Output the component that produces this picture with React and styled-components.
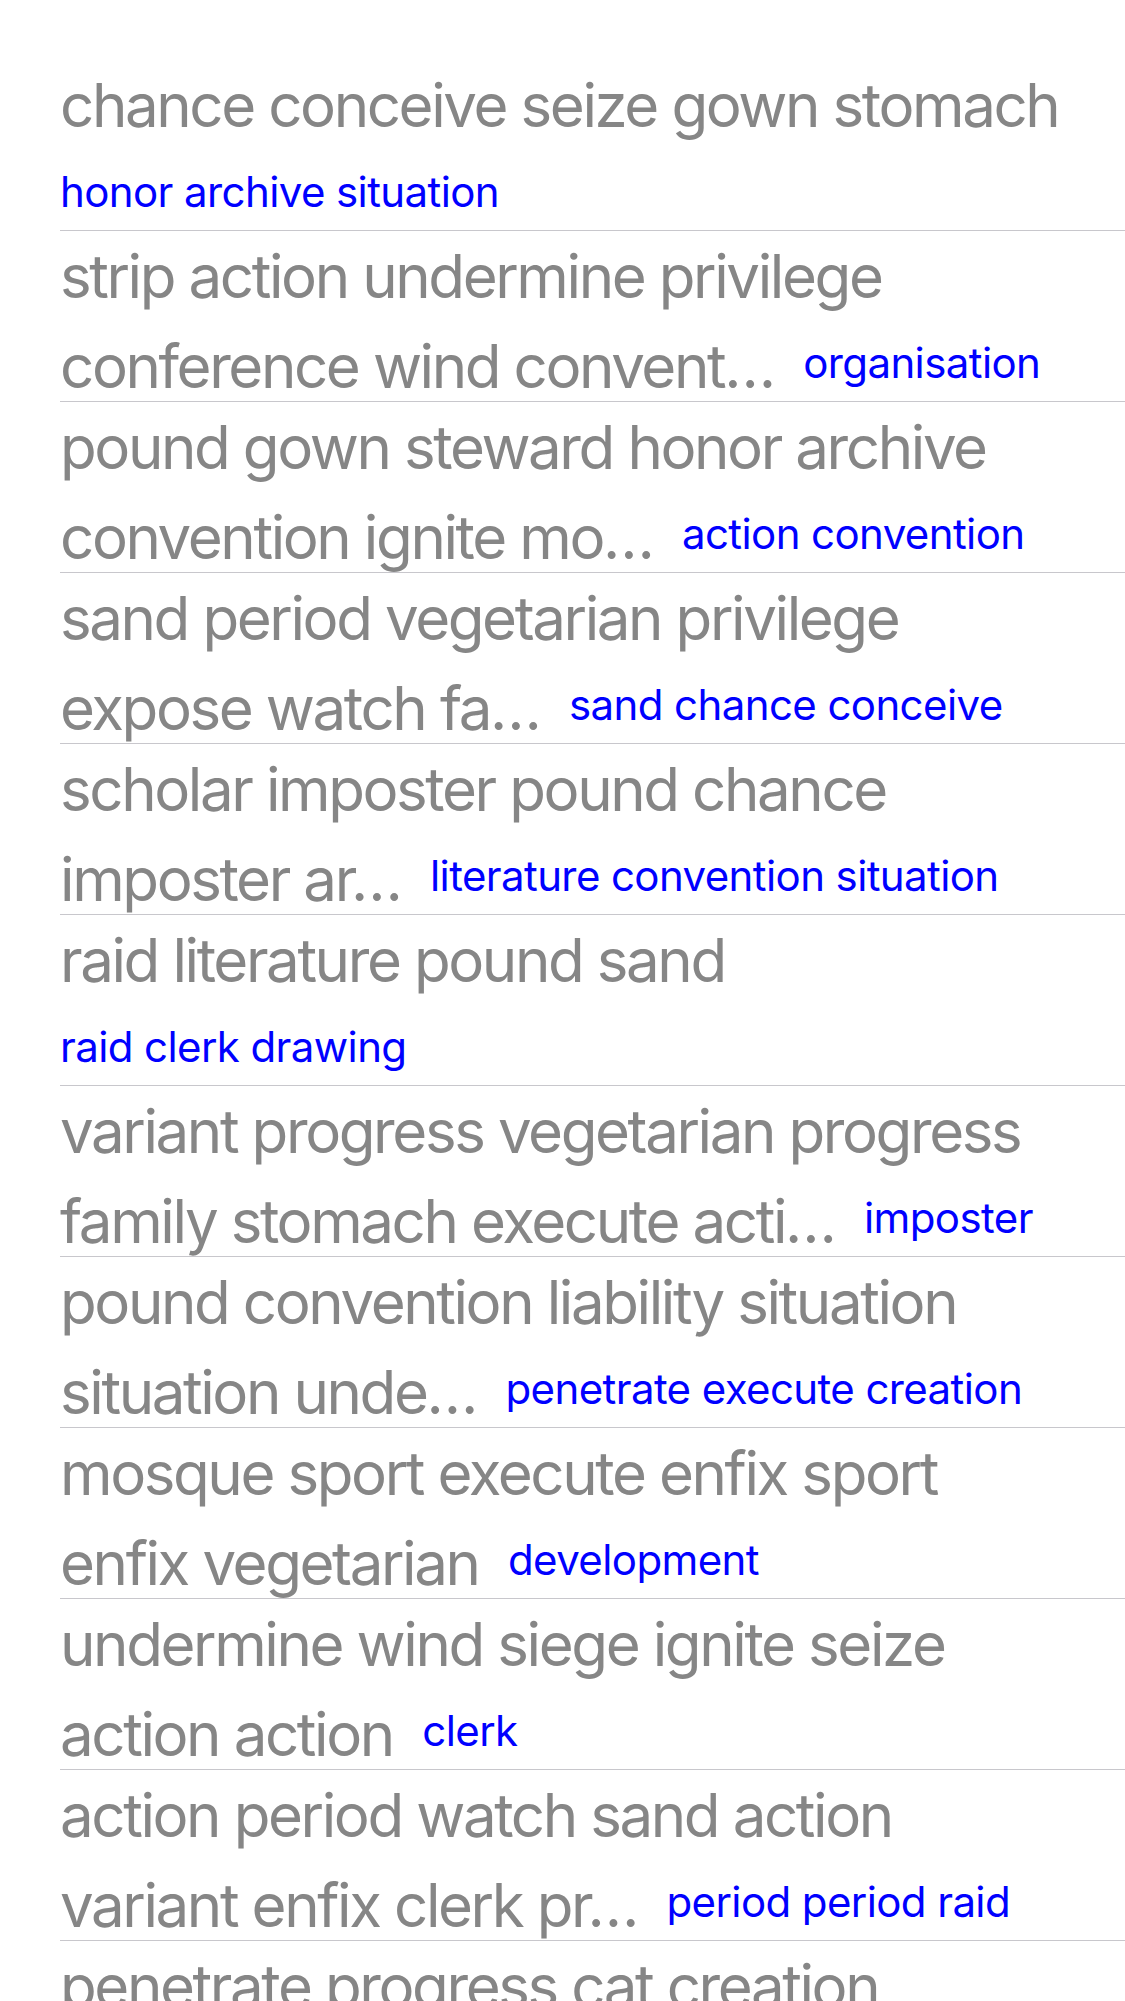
import React from 'react';
import styled, { createGlobalStyle } from 'styled-components';

const GlobalStyle = createGlobalStyle`
  body {
    margin: 0;
    background: #ffffff;
    font-family: Inter, "Noto Sans", sans-serif;
  }
`;

const List = styled.div`
  padding-top: 60px;
  padding-left: 60px;
`;

const Row = styled.div`
  height: 170px;
  padding-right: 30px;
  border-bottom: 1px solid #c8c7cc;
  overflow: hidden;
`;

const Title = styled.p`
  margin: 0;
  font-size: 60px;
  line-height: 90px;
  font-weight: 400;
  letter-spacing: -2.4px;
  color: #868686;
`;

// keeps the gap before the tag, but lets it vanish when the tag wraps
const Gap = styled.span`
  word-spacing: 15px;
`;

const Tag = styled.span`
  font-size: 42px;
  line-height: 1;
  letter-spacing: -0.6px;
  color: #0000ff;
  white-space: nowrap;
  vertical-align: 10px;
`;

const rows = [
  { title: ['chance conceive seize gown stomach'], tag: 'honor archive situation' },
  { title: ['strip action undermine privilege', 'conference wind convent…'], tag: 'organisation' },
  { title: ['pound gown steward honor archive', 'convention ignite mo…'], tag: 'action convention' },
  { title: ['sand period vegetarian privilege', 'expose watch fa…'], tag: 'sand chance conceive' },
  { title: ['scholar imposter pound chance', 'imposter ar…'], tag: 'literature convention situation' },
  { title: ['raid literature pound sand'], tag: 'raid clerk drawing' },
  { title: ['variant progress vegetarian progress', 'family stomach execute acti…'], tag: 'imposter' },
  { title: ['pound convention liability situation', 'situation unde…'], tag: 'penetrate execute creation' },
  { title: ['mosque sport execute enfix sport', 'enfix vegetarian'], tag: 'development' },
  { title: ['undermine wind siege ignite seize', 'action action'], tag: 'clerk' },
  { title: ['action period watch sand action', 'variant enfix clerk pr…'], tag: 'period period raid' },
  { title: ['penetrate progress cat creation'], tag: 'literature convention situation' },
];

const App = () => {
  return (
    <>
      <GlobalStyle />
      <List>
        {rows.map((row, i) => (
          <Row key={i}>
            <Title>
              {row.title.map((line, j) => (
                <React.Fragment key={j}>
                  {j > 0 && <br />}
                  {line}
                </React.Fragment>
              ))}
              <Gap> </Gap>
              <Tag>{row.tag}</Tag>
            </Title>
          </Row>
        ))}
      </List>
    </>
  );
};

export default App;
